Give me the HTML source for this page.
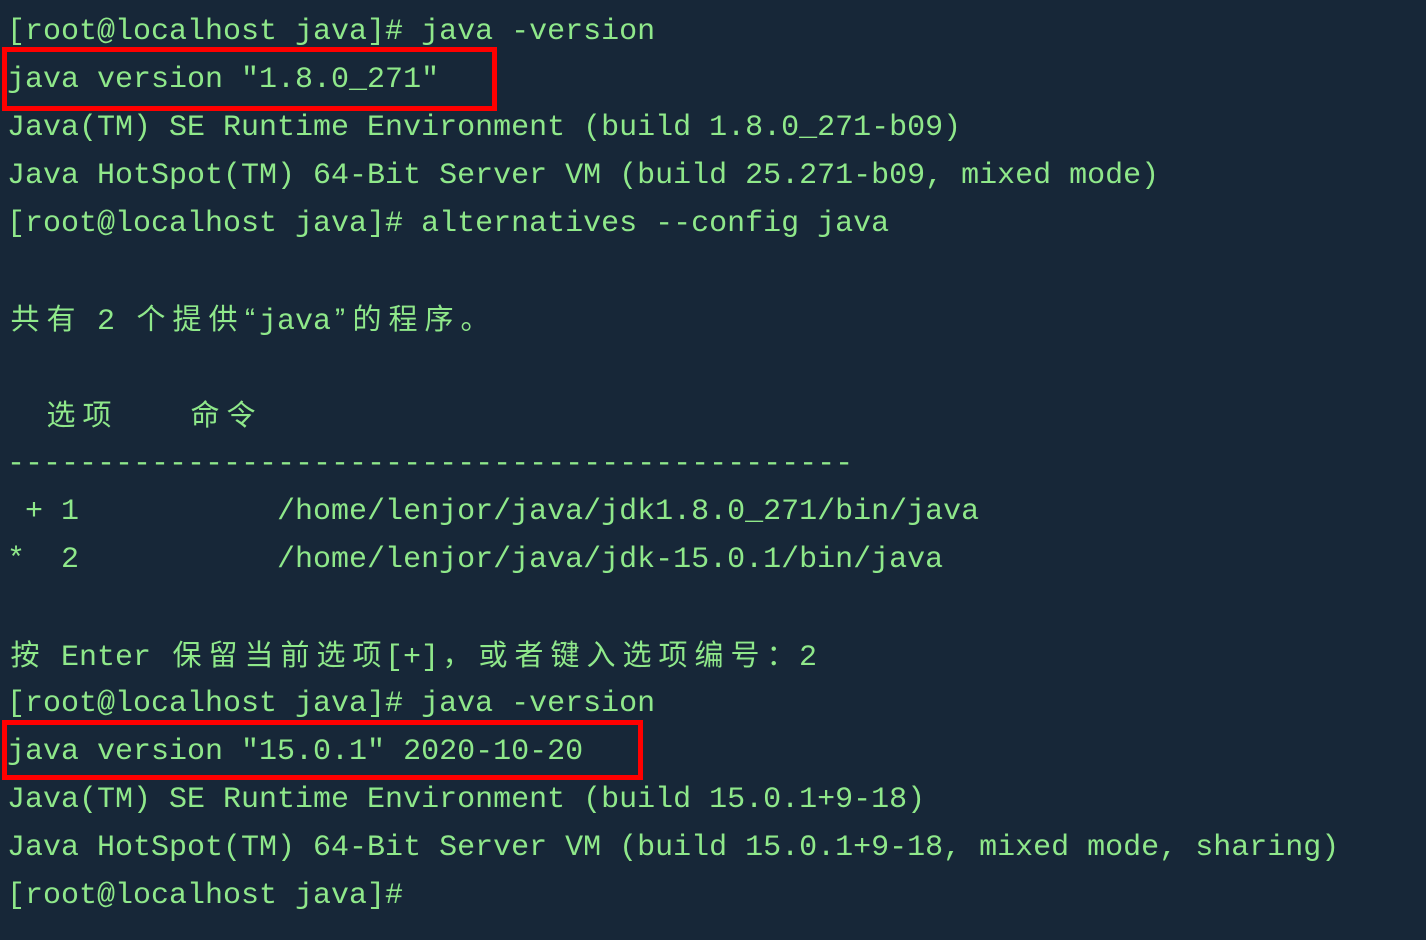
<!DOCTYPE html>
<html><head><meta charset="utf-8"><style>
body{margin:0;background:#172738;width:1426px;height:940px;overflow:hidden;position:relative}
.t{position:absolute;left:7px;top:8px;font-family:"Liberation Mono","Noto Sans CJK SC",monospace;font-size:30px;line-height:48px;color:#8fe88a}
.t div{height:48px;white-space:pre}
.t div.c{position:relative;top:-3px}
i{font-style:normal;display:inline-block;width:36px;text-align:center;font-family:"Noto Sans CJK SC",sans-serif;font-size:29px}
b{font-weight:normal;display:inline-block;width:18px;text-align:center;font-family:"Liberation Sans",sans-serif;font-size:30px}
.box{position:absolute;border:5px solid #ff0000;box-sizing:border-box}
</style></head><body>
<div class="t"><div>[root@localhost java]# java -version</div><div>java version "1.8.0_271"</div><div>Java(TM) SE Runtime Environment (build 1.8.0_271-b09)</div><div>Java HotSpot(TM) 64-Bit Server VM (build 25.271-b09, mixed mode)</div><div>[root@localhost java]# alternatives --config java</div><div> </div><div class="c"><i>共</i><i>有</i> 2 <i>个</i><i>提</i><i>供</i><b>“</b>java<b>”</b><i>的</i><i>程</i><i>序</i><i>。</i></div><div> </div><div class="c">  <i>选</i><i>项</i>    <i>命</i><i>令</i></div><div>-----------------------------------------------</div><div> + 1           /home/lenjor/java/jdk1.8.0_271/bin/java</div><div>*  2           /home/lenjor/java/jdk-15.0.1/bin/java</div><div> </div><div class="c"><i>按</i> Enter <i>保</i><i>留</i><i>当</i><i>前</i><i>选</i><i>项</i>[+]<i>，</i><i>或</i><i>者</i><i>键</i><i>入</i><i>选</i><i>项</i><i>编</i><i>号</i><i>：</i>2</div><div>[root@localhost java]# java -version</div><div>java version "15.0.1" 2020-10-20</div><div>Java(TM) SE Runtime Environment (build 15.0.1+9-18)</div><div>Java HotSpot(TM) 64-Bit Server VM (build 15.0.1+9-18, mixed mode, sharing)</div><div>[root@localhost java]#</div></div>
<div class="box" style="left:2px;top:47px;width:495px;height:64px"></div>
<div class="box" style="left:2px;top:720px;width:641px;height:60px"></div>
</body></html>
